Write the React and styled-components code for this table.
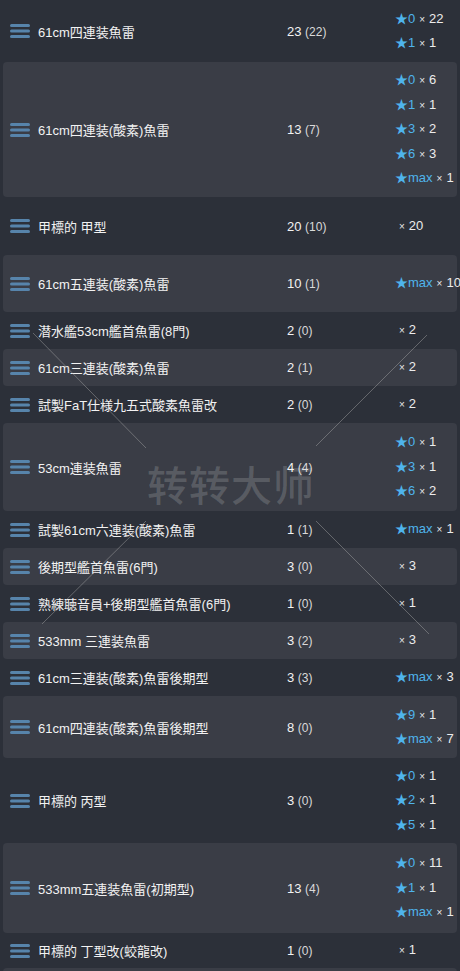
import React from "react";
import styled, { createGlobalStyle } from "styled-components";

const rows = [
  { name: "61cm四連装魚雷", total: 23, sub: 22, h: 62, stars: [["0", 22], ["1", 1]] },
  { name: "61cm四連装(酸素)魚雷", total: 13, sub: 7, h: 135, stars: [["0", 6], ["1", 1], ["3", 2], ["6", 3], ["max", 1]] },
  { name: "甲標的 甲型", total: 20, sub: 10, h: 58, stars: [[null, 20]] },
  { name: "61cm五連装(酸素)魚雷", total: 10, sub: 1, h: 57, stars: [["max", 10]] },
  { name: "潜水艦53cm艦首魚雷(8門)", total: 2, sub: 0, h: 37, stars: [[null, 2]] },
  { name: "61cm三連装(酸素)魚雷", total: 2, sub: 1, h: 37, stars: [[null, 2]] },
  { name: "試製FaT仕様九五式酸素魚雷改", total: 2, sub: 0, h: 37, stars: [[null, 2]] },
  { name: "53cm連装魚雷", total: 4, sub: 4, h: 88, stars: [["0", 1], ["3", 1], ["6", 2]] },
  { name: "試製61cm六連装(酸素)魚雷", total: 1, sub: 1, h: 37, stars: [["max", 1]] },
  { name: "後期型艦首魚雷(6門)", total: 3, sub: 0, h: 37, stars: [[null, 3]] },
  { name: "熟練聴音員+後期型艦首魚雷(6門)", total: 1, sub: 0, h: 37, stars: [[null, 1]] },
  { name: "533mm 三連装魚雷", total: 3, sub: 2, h: 37, stars: [[null, 3]] },
  { name: "61cm三連装(酸素)魚雷後期型", total: 3, sub: 3, h: 37, stars: [["max", 3]] },
  { name: "61cm四連装(酸素)魚雷後期型", total: 8, sub: 0, h: 62, stars: [["9", 1], ["max", 7]] },
  { name: "甲標的 丙型", total: 3, sub: 0, h: 85, stars: [["0", 1], ["2", 1], ["5", 1]] },
  { name: "533mm五連装魚雷(初期型)", total: 13, sub: 4, h: 90, stars: [["0", 11], ["1", 1], ["max", 1]] },
  { name: "甲標的 丁型改(蛟龍改)", total: 1, sub: 0, h: 35, stars: [[null, 1]] },
];

const Global = createGlobalStyle`
  html, body {
    margin: 0;
    padding: 0;
    background: #2c3039;
  }
  body {
    font-family: "Liberation Sans", "Noto Sans CJK JP", sans-serif;
    color: #ececec;
    font-size: 13px;
  }
`;

const Page = styled.div`
  position: relative;
  width: 460px;
  overflow: hidden;
  background: #2c3039;
`;

const Row = styled.div`
  display: grid;
  grid-template-columns: ${(p) => (p.$alt ? 35 : 38)}px 249px 108px 1fr;
  align-items: center;
  height: ${(p) => p.$h}px;
  margin: 0 ${(p) => (p.$alt ? 3 : 0)}px;
  background: ${(p) => (p.$alt ? "#3a3d46" : "#2c3039")};
  border-radius: ${(p) => (p.$alt ? 4 : 0)}px;
`;

const IconCell = styled.div`
  display: flex;
  align-items: center;
  padding-left: ${(p) => (p.$alt ? 7 : 10)}px;
`;

const Name = styled.div`
  white-space: nowrap;
  color: #f2f2f2;
`;

const Count = styled.div`
  color: #f2f2f2;
  white-space: nowrap;

  & small {
    font-size: 12px;
    color: #dadada;
  }
`;

const Stars = styled.div`
  display: flex;
  flex-direction: column;
  white-space: nowrap;
`;

const StarLine = styled.div`
  height: 24.5px;
  line-height: 24.5px;
  padding-left: ${(p) => (p.$plain ? 4 : 0)}px;
`;

const Level = styled.span`
  color: #4fb4ec;
`;

const Times = styled.span`
  font-size: 10px;
  color: #e8e8e8;
  margin: 0 4px 0 ${(p) => (p.$plain ? 0 : 4)}px;
`;

const Overlay = styled.div`
  position: absolute;
  inset: 0;
  pointer-events: none;
`;

const Mark = styled.div`
  position: absolute;
  left: 147px;
  top: 453px;
  font-family: "Noto Sans CJK SC", sans-serif;
  font-size: 41px;
  font-weight: 500;
  letter-spacing: 1px;
  color: rgba(255, 255, 255, 0.16);
`;

const Bars = () => (
  <svg width="20" height="14" viewBox="0 0 20 14">
    <rect x="0" y="0" width="20" height="3" rx="1.5" fill="#5784ab" />
    <rect x="0" y="5.5" width="20" height="3" rx="1.5" fill="#5784ab" />
    <rect x="0" y="11" width="20" height="3" rx="1.5" fill="#5784ab" />
  </svg>
);

export default function App() {
  return (
    <Page>
      <Global />
      {rows.map((r, i) => {
        const alt = i % 2 === 1;
        return (
          <Row key={i} $alt={alt} $h={r.h}>
            <IconCell $alt={alt}>
              <Bars />
            </IconCell>
            <Name>{r.name}</Name>
            <Count>
              {r.total} <small>({r.sub})</small>
            </Count>
            <Stars>
              {r.stars.map(([lv, n], j) =>
                lv === null ? (
                  <StarLine key={j} $plain>
                    <Times $plain>×</Times>
                    {n}
                  </StarLine>
                ) : (
                  <StarLine key={j}>
                    <Level>★{lv}</Level>
                    <Times>×</Times>
                    {n}
                  </StarLine>
                )
              )}
            </Stars>
          </Row>
        );
      })}
      <Row $alt $h={20} />
      <Overlay>
        <svg width="460" height="971">
          <g stroke="rgba(170,170,170,0.45)" strokeWidth="1">
            <line x1="33" y1="333" x2="146" y2="448" />
            <line x1="427" y1="335" x2="316" y2="446" />
            <line x1="146" y1="521" x2="42" y2="624" />
            <line x1="316" y1="521" x2="429" y2="634" />
          </g>
        </svg>
        <Mark>转转大师</Mark>
      </Overlay>
    </Page>
  );
}
